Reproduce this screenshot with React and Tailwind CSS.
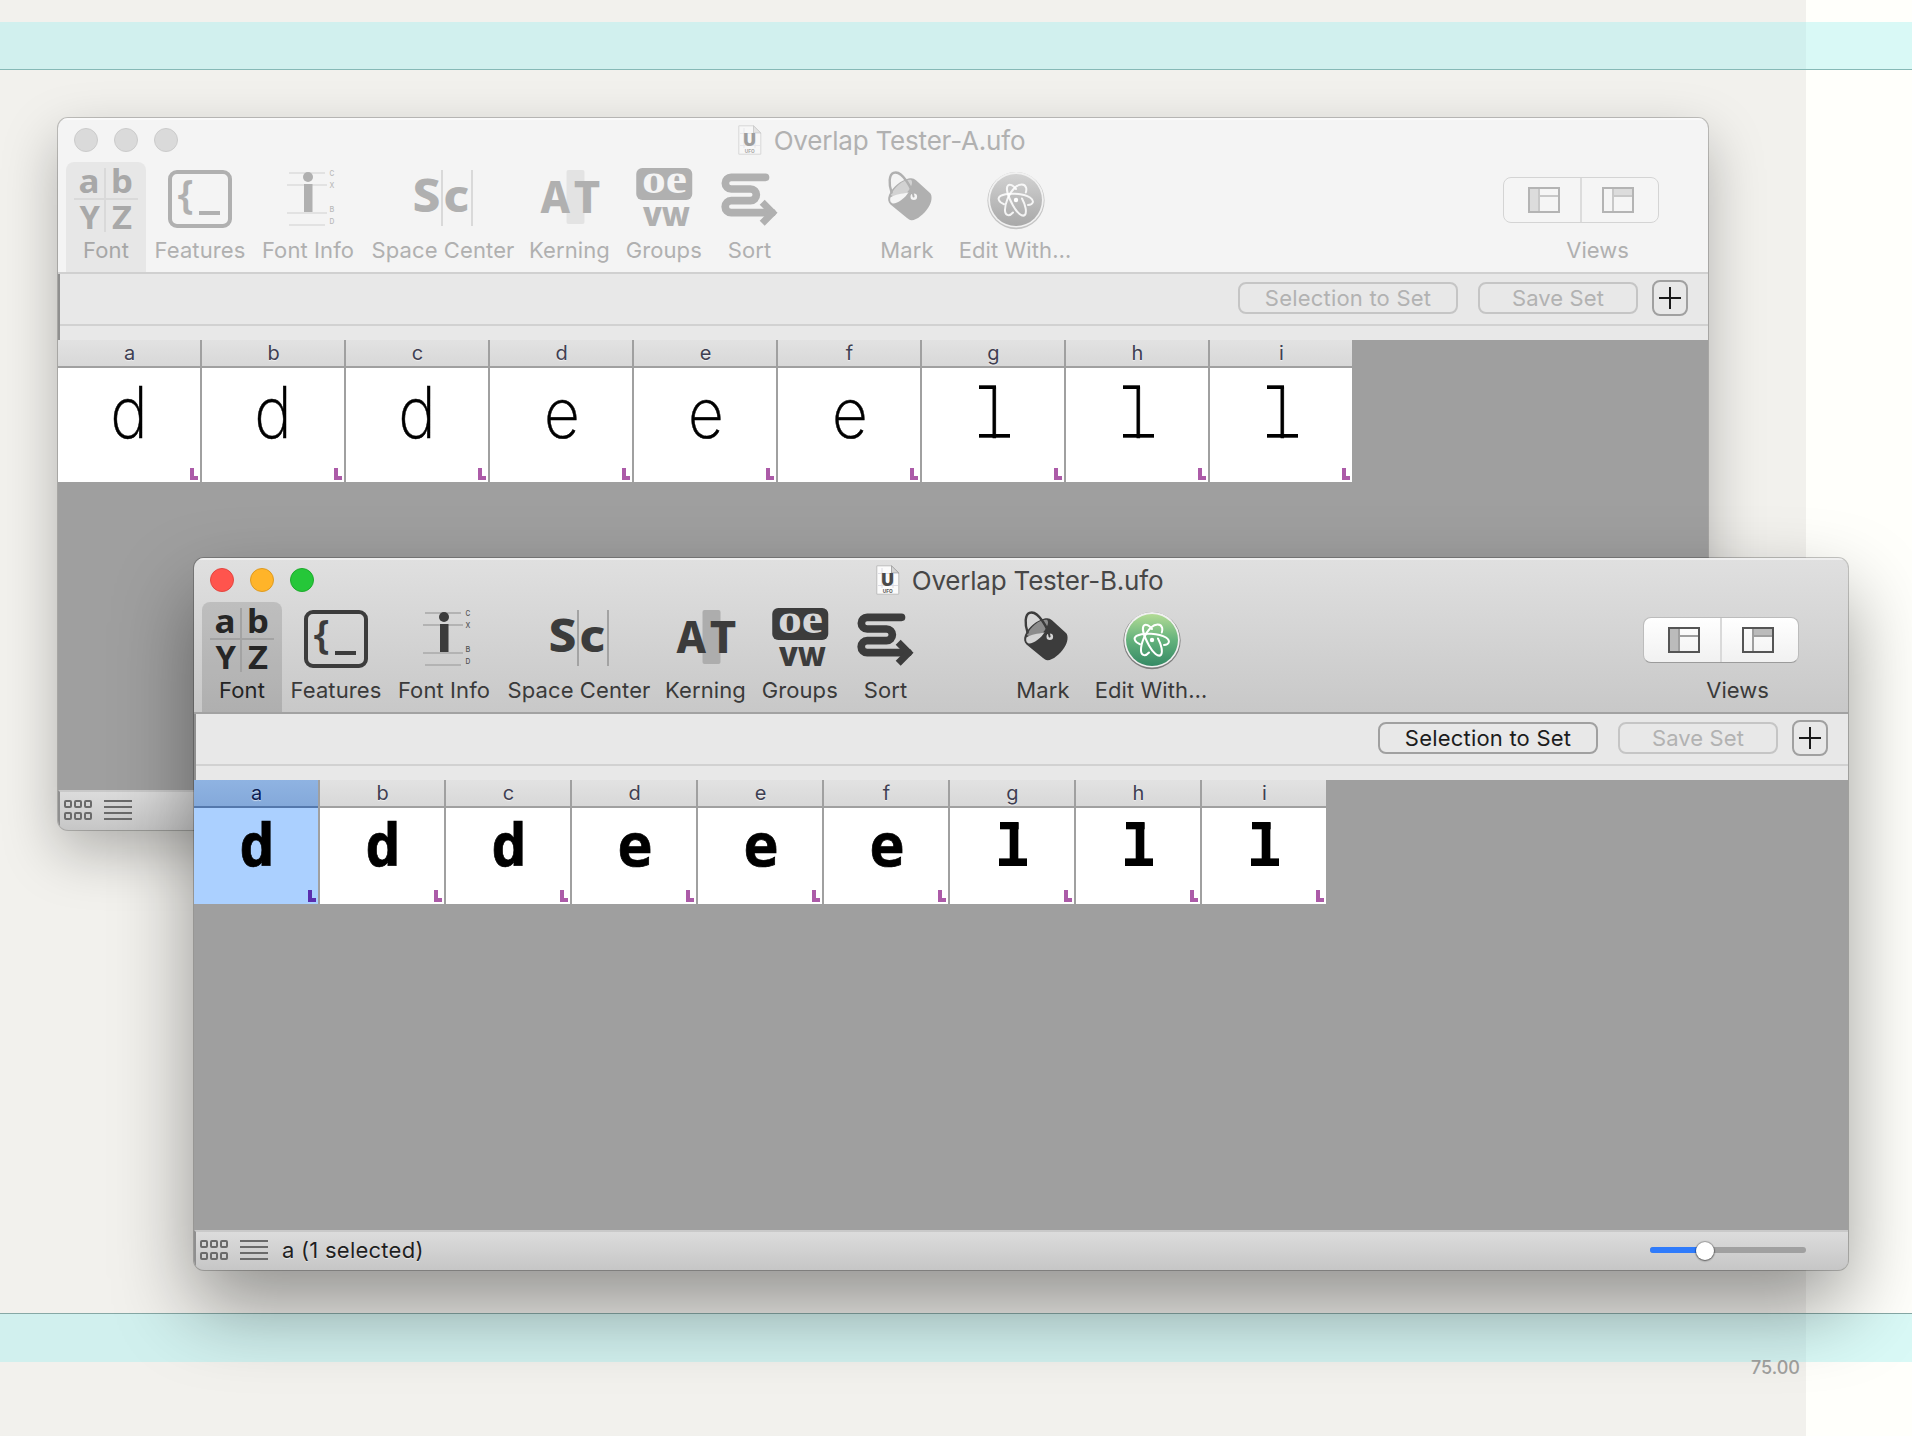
import React from "react";

const SANS = "Inter, 'Liberation Sans', sans-serif";

const activeTheme = {
  ink: "#3c3c3c",
  strong: "#262626",
  line: "#a3a3a3",
  thin: "#b3b3b3",
  soft: "#adadad",
  bg: "#d6d6d6",
  mid: "#8c8c8c",
  pale: "#d4d4d4",
};

const inactiveTheme = {
  ink: "#b0b0b0",
  strong: "#a8a8a8",
  line: "#d9d9d9",
  thin: "#e2e2e2",
  soft: "#e3e3e3",
  bg: "#f4f4f4",
  mid: "#d2d2d2",
  pale: "#f4f4f4",
};

function Glyph({ x, y, w, size, fill, family, weight = 700, children }) {
  return (
    <text
      x={x}
      y={y}
      fontSize={size}
      fontWeight={weight}
      fontFamily={family}
      fill={fill}
      textLength={w}
      lengthAdjust="spacingAndGlyphs"
    >
      {children}
    </text>
  );
}

function Icon({ children }) {
  return (
    <svg className="block h-[72px] w-[72px] shrink-0 overflow-visible" viewBox="0 0 72 72" fill="none">
      {children}
    </svg>
  );
}

const NOTO = "'Noto Sans', sans-serif";

function FontIcon({ t }) {
  return (
    <Icon>
      <path d="M4 35H68M35 4V68" stroke={t.line} strokeWidth="2" />
      <Glyph x={8.5} y={29.3} w={21} size={33} fill={t.strong} family={NOTO}>a</Glyph>
      <Glyph x={41} y={29.3} w={22} size={32} fill={t.strong} family={NOTO}>b</Glyph>
      <Glyph x={9.5} y={65} w={20.5} size={33} fill={t.strong} family={NOTO}>Y</Glyph>
      <Glyph x={42} y={65} w={20} size={33} fill={t.strong} family={NOTO}>Z</Glyph>
    </Icon>
  );
}

function FeaturesIcon({ t }) {
  return (
    <Icon>
      <rect x="6" y="8" width="60" height="54" rx="7" stroke={t.ink} strokeWidth="4" />
      <Glyph x={13.5} y={44} w={16} size={39} weight={600} fill={t.ink} family={NOTO}>{"{"}</Glyph>
      <rect x="35" y="47" width="21" height="4" fill={t.ink} />
    </Icon>
  );
}

function FontInfoIcon({ t }) {
  return (
    <Icon>
      <path d="M17 9H53M15 21H55M15 49H55M17 61H53" stroke={t.thin} strokeWidth="2" />
      <circle cx="36" cy="13" r="5" fill={t.ink} />
      <rect x="32" y="20" width="8.5" height="28" fill={t.ink} />
      <g opacity="0.85">
        <Glyph x={57.5} y={11.7} w={4.8} size={8} weight={500} fill={t.ink} family={SANS}>C</Glyph>
        <Glyph x={57.5} y={23.7} w={4.8} size={8} weight={500} fill={t.ink} family={SANS}>X</Glyph>
        <Glyph x={57.5} y={47.6} w={4.8} size={8} weight={500} fill={t.ink} family={SANS}>B</Glyph>
        <Glyph x={57.5} y={60} w={4.8} size={8} weight={500} fill={t.ink} family={SANS}>D</Glyph>
      </g>
    </Icon>
  );
}

function SpaceCenterIcon({ t }) {
  return (
    <Icon>
      <path d="M35 6V62M65 6V62" stroke={t.line} strokeWidth="2" />
      <Glyph x={5.6} y={48} w={28} size={46} fill={t.ink} family={NOTO} weight={800}>S</Glyph>
      <Glyph x={36.3} y={48} w={26} size={44} fill={t.ink} family={NOTO} weight={800}>c</Glyph>
    </Icon>
  );
}

function KerningIcon({ t }) {
  return (
    <Icon>
      <rect x="32.5" y="6" width="18" height="54" rx="2" fill={t.soft} />
      <Glyph x={6.5} y={48.7} w={29.5} size={45} fill={t.ink} family={NOTO} weight={800}>A</Glyph>
      <Glyph x={39.8} y={48.7} w={26.5} size={45} fill={t.ink} family={NOTO} weight={800}>T</Glyph>
    </Icon>
  );
}

function GroupsIcon({ t }) {
  return (
    <Icon>
      <rect x="8.25" y="4" width="56" height="32" rx="6" fill={t.ink} />
      <Glyph x={14} y={29.3} w={45} size={41} fill={t.bg} family="'Liberation Serif', serif">oe</Glyph>
      <Glyph x={15} y={61.7} w={47} size={27} fill={t.ink} family={NOTO} weight={900}>VW</Glyph>
    </Icon>
  );
}

function SortIcon({ t }) {
  return (
    <Icon>
      <path
        d="M51.5 13.3H17.2A5.85 5.85 0 0 0 17.2 25H36.5A5.85 5.85 0 0 1 36.5 36.7H17.2A5.85 5.85 0 0 0 17.2 48.7H58"
        stroke={t.ink}
        strokeWidth="7.7"
        strokeLinecap="round"
      />
      <path d="M48.2 38.2L58.6 48.7L48.2 59.2" stroke={t.ink} strokeWidth="7" />
    </Icon>
  );
}

function MarkIcon({ t }) {
  return (
    <Icon>
      <path
        d="M37.5 14.6C41 13.6 43 14.6 45 16.2L59 29C61.5 31.5 61.2 38 57 44C53 50 45.5 56.5 40.5 56.2C38.5 56 37.5 55.2 36 54L19.5 40.5C17 38 16.4 35 18 31C22 22.5 30 16.5 37.5 14.6Z"
        fill={t.ink}
      />
      <path d="M19.8 31C24 22 33 15 40 15.8C43 19 39 25 34.6 30.5C29 34 23 33 19.8 31Z" fill={t.mid} />
      <path d="M19.4 33.5C25 29.6 30 30.4 37.6 28.2C34 34.5 25 40.5 21.2 39.2C19 38.2 18.9 36 19.4 33.5Z" fill={t.pale} />
      <path
        d="M20.6 28.5C17.5 20 18 10.5 22.5 8.8C28 7 32 12 35.5 17C38.5 21.5 41.5 27 42.5 32"
        stroke={t.ink}
        strokeWidth="2.4"
        strokeLinecap="round"
      />
      <circle cx="42.8" cy="32.8" r="3.3" fill={t.pale} />
      <path d="M41 26L42.6 32.6" stroke={t.ink} strokeWidth="2" strokeLinecap="round" />
    </Icon>
  );
}

function EditIcon({ active }) {
  const id = active ? "atomOn" : "atomOff";
  return (
    <Icon>
      <defs>
        <linearGradient id={id} x1="0" y1="0" x2="0" y2="1">
          <stop offset="0" stopColor={active ? "#b2db95" : "#d2d2d2"} />
          <stop offset="0.5" stopColor={active ? "#64b27c" : "#bcbcbc"} />
          <stop offset="1" stopColor={active ? "#358a65" : "#a9a9a9"} />
        </linearGradient>
      </defs>
      <circle cx="37" cy="36.6" r="28.6" fill={active ? "#7d7d7d" : "#c4c4c4"} />
      <circle cx="37" cy="35.8" r="27.8" fill={active ? "#f0f0f0" : "#f1f1f1"} />
      <circle cx="37" cy="36" r="26" fill={`url(#${id})`} />
      <g stroke="#fff" strokeOpacity={active ? 1 : 0.85} strokeWidth="2" strokeLinecap="round">
        <path d="M25 40.2C19.5 38 18 34 21.5 31.8C28 28.5 44 29 51 33.5C56 37 54 40.8 49 41" />
        <path d="M43 34.5C46.5 41 48 48 46 50.8C43.5 53.5 38 49 34 41.5C29 32.5 26.5 24 29 21.4C31 19.6 34 21.5 37 25" />
        <path d="M34 48.5C30.5 52.5 26.5 52 26 47C25.6 40 30 29 36 23.5C40.5 19.5 46 19.5 47.2 24C47.6 26 47.3 27 46.8 28.5" />
      </g>
      <circle cx="37" cy="36" r="2.2" fill="#fff" />
    </Icon>
  );
}

function ToolItem({ width, label, active, selected, children }) {
  const box = selected
    ? active
      ? "rounded-t-[8px] bg-black/12 text-[#242424]"
      : "rounded-t-[8px] bg-black/5 text-[#a6a6a6]"
    : active
      ? "text-[#3a3a3a]"
      : "text-[#b0b0b0]";
  return (
    <div className={`flex h-full shrink-0 flex-col items-center pt-[2px] ${box}`} style={{ width }}>
      {children}
      <span className="whitespace-nowrap text-[22px] leading-[28px] tracking-[0.1px]">{label}</span>
    </div>
  );
}

function TitleIcon({ active }) {
  return (
    <svg className="block h-[30px] w-[24px]" viewBox="0 0 24 30" opacity={active ? 1 : 0.5}>
      <path d="M0.8 0.8H15.5L22.8 8V29.2H0.8Z" fill="#fbfbfb" stroke="#bdbdbd" strokeWidth="1" />
      <path d="M15.5 0.8V8H22.8Z" fill="#d5d5d5" stroke="#9a9a9a" strokeWidth="0.8" />
      <path d="M2 8.5H22M2 20.5H22M6 3V23M17 8V23" stroke="#dcdce4" strokeWidth="1" />
      <Glyph x={4.8} y={20.6} w={13.6} size={18} fill="#4a4a4a" family={NOTO} weight={900}>U</Glyph>
      <Glyph x={6.8} y={28} w={10} size={5} fill="#555" family={SANS}>UFO</Glyph>
    </svg>
  );
}

function Lights({ active }) {
  const colors = active
    ? ["bg-[#ff544d] border-[#e24640]", "bg-[#ffb429] border-[#dd9a20]", "bg-[#25c739] border-[#1dab2c]"]
    : ["bg-[#dadada] border-[#cbcbcb]", "bg-[#dadada] border-[#cbcbcb]", "bg-[#dadada] border-[#cbcbcb]"];
  return (
    <div className="absolute left-[16px] top-[10px] flex gap-[16px]">
      {colors.map((c, i) => (
        <span key={i} className={`h-[24px] w-[24px] rounded-full border ${c}`} />
      ))}
    </div>
  );
}

function Views({ active }) {
  const shell = active
    ? "border-[#bcbcbc] border-b-[#9b9b9b] bg-linear-to-b from-white to-[#f1f1f1]"
    : "border-[#d4d4d4] bg-[#f5f5f5]";
  const dark = active ? "#555" : "#b4b4b4";
  const mid = active ? "#9f9f9f" : "#c8c8c8";
  const fill = active ? "#bbb" : "#dcdcdc";
  return (
    <div className={`flex h-[46px] w-[156px] rounded-[8px] border ${shell}`}>
      <div className={`flex w-[78px] items-center justify-center border-r-2 ${active ? "border-[#d9d9d9]" : "border-[#dcdcdc]"}`}>
        <svg className="ml-[4px] h-[26px] w-[32px]" viewBox="0 0 32 26" fill="none">
          <rect x="2" y="2" width="8" height="22" fill={fill} />
          <path d="M11 2V24M12 9H30" stroke={mid} strokeWidth="2" />
          <rect x="1" y="1" width="30" height="24" stroke={dark} strokeWidth="2" />
        </svg>
      </div>
      <div className="flex flex-1 items-center justify-center">
        <svg className="mr-[4px] h-[26px] w-[32px]" viewBox="0 0 32 26" fill="none">
          <rect x="12" y="2" width="18" height="6" fill={fill} />
          <path d="M11 2V24M12 9H30" stroke={mid} strokeWidth="2" />
          <rect x="1" y="1" width="30" height="24" stroke={dark} strokeWidth="2" />
        </svg>
      </div>
    </div>
  );
}

function Toolbar({ active, title }) {
  const t = active ? activeTheme : inactiveTheme;
  return (
    <header
      className={`relative flex h-[156px] flex-col border-b-2 ${
        active
          ? "border-[#a2a2a2] bg-linear-to-b from-[#e0e0e0] to-[#c8c8c8] shadow-[inset_0_2px_0_#efefef]"
          : "border-[#d0d0d0] bg-[#f4f4f4] shadow-[inset_0_2px_0_#fafafa]"
      }`}
    >
      <Lights active={active} />
      <div
        className={`flex h-[44px] items-center justify-center gap-[12px] pr-[3px] ${
          active ? "text-[#474747]" : "text-[#b1b1b1]"
        }`}
      >
        <TitleIcon active={active} />
        <span className="whitespace-nowrap pt-[1px] text-[26px] tracking-[-0.2px]">{title}</span>
      </div>
      <div className="flex h-[110px] pl-[8px]">
        <ToolItem width={80} label="Font" active={active} selected><FontIcon t={t} /></ToolItem>
        <ToolItem width={108} label="Features" active={active}><FeaturesIcon t={t} /></ToolItem>
        <ToolItem width={108} label="Font Info" active={active}><FontInfoIcon t={t} /></ToolItem>
        <ToolItem width={162} label="Space Center" active={active}><SpaceCenterIcon t={t} /></ToolItem>
        <ToolItem width={91} label="Kerning" active={active}><KerningIcon t={t} /></ToolItem>
        <ToolItem width={97.5} label="Groups" active={active}><GroupsIcon t={t} /></ToolItem>
        <ToolItem width={74} label="Sort" active={active}><SortIcon t={t} /></ToolItem>
        <div className="w-[82.5px] shrink-0" />
        <ToolItem width={76} label="Mark" active={active}><MarkIcon t={t} /></ToolItem>
        <ToolItem width={140} label="Edit With…" active={active}><EditIcon active={active} /></ToolItem>
        <div className="ml-auto mr-[49px] flex w-[156px] flex-col items-center pt-[15px]">
          <Views active={active} />
          <span
            className={`pl-[33px] pt-[13px] text-[22px] leading-[28px] ${
              active ? "text-[#3a3a3a]" : "text-[#b0b0b0]"
            }`}
          >
            Views
          </span>
        </div>
      </div>
    </header>
  );
}

function SetBar({ active }) {
  const on = "border-[#a0a0a0] text-[#1c1c1c]";
  const off = "border-[#c5c5c5] text-[#b2b2b2]";
  return (
    <div className="h-[66px] border-l-2 border-[#8f8f8f] bg-[#e8e8e8]">
      <div className="flex h-[52px] items-start justify-end border-b-2 border-[#d1d1d1] pr-[20px] pt-[6px]">
        <div className={`mt-[2px] flex h-[32px] w-[220px] items-center justify-center rounded-[8px] border-2 text-[22px] tracking-[0.2px] ${active ? on : off}`}>
          Selection to Set
        </div>
        <div className={`ml-[20px] mt-[2px] flex h-[32px] w-[160px] items-center justify-center rounded-[8px] border-2 text-[22px] tracking-[0.1px] ${off}`}>
          Save Set
        </div>
        <div className="ml-[14px] flex h-[36px] w-[36px] items-center justify-center rounded-[8px] border-2 border-[#a0a0a0]">
          <svg className="h-[22px] w-[22px]" viewBox="0 0 22 22">
            <path d="M11 0V22M0 11H22" stroke="#1a1a1a" strokeWidth="2" />
          </svg>
        </div>
      </div>
    </div>
  );
}

const NAMES = ["a", "b", "c", "d", "e", "f", "g", "h", "i"];
const DRAWN = ["d", "d", "d", "e", "e", "e", "l", "l", "l"];

function LightGlyph({ ch }) {
  return (
    <svg className="block h-[114px] w-[142px]" viewBox="0 0 142 114">
      {ch === "l" && (
        <>
          <text x="72.3" y="69.7" textAnchor="middle" fontFamily="Inter, sans-serif" fontWeight="200" fontSize="70" fill="#000" stroke="#000" strokeWidth="0.4">l</text>
          <rect x="57" y="17.3" width="17" height="3.7" />
          <rect x="57" y="66" width="31" height="3.7" />
        </>
      )}
      {ch === "d" && (
        <text transform="translate(71 69.7) scale(0.88 1)" textAnchor="middle" fontFamily="Inter, sans-serif" fontWeight="200" fontSize="72" fill="#000" stroke="#000" strokeWidth="0.5">d</text>
      )}
      {ch === "e" && (
        <text transform="translate(71.8 69.5) scale(0.9 1)" textAnchor="middle" fontFamily="Inter, sans-serif" fontWeight="200" fontSize="69" fill="#000" stroke="#000" strokeWidth="0.5">e</text>
      )}
    </svg>
  );
}

function BoldGlyph({ ch }) {
  return (
    <svg className="block h-[96px] w-[124px]" viewBox="0 0 124 96">
      {ch === "l" ? (
        <>
          <text x="64" y="58" textAnchor="middle" fontFamily="Inter, sans-serif" fontWeight="700" fontSize="59" fill="#000">l</text>
          <rect x="50" y="14" width="18.6" height="7.3" />
          <rect x="49" y="50.4" width="28" height="7.6" />
        </>
      ) : (
        <text x="63" y="58" textAnchor="middle" fontFamily="'DejaVu Sans Mono', monospace" fontWeight="700" fontSize="58" fill="#000" stroke="#000" strokeWidth="0.7">{ch}</text>
      )}
    </svg>
  );
}

function Cell({ name, ch, bold, selected, last }) {
  return (
    <div className={`relative flex shrink-0 flex-col ${last ? "" : "border-r-2 border-[#a0a0a0]"}`}>
      <div
        className={`h-[28px] border-b-2 pl-[1px] text-center text-[20px] leading-[26px] [text-shadow:0_1px_1px_#fff9] ${
          selected
            ? "border-[#5478ac] bg-linear-to-b from-[#8fb3e2] to-[#84a9da] text-[#0a1c50]"
            : "border-[#a0a0a0] bg-linear-to-b from-[#e2e2e2] to-[#d8d8d8] text-[#3f3f52]"
        }`}
      >
        {name}
      </div>
      <div className={selected ? "bg-[#abd0ff]" : "bg-white"}>
        {bold ? <BoldGlyph ch={ch} /> : <LightGlyph ch={ch} />}
      </div>
      <span
        className={`absolute bottom-[2px] right-[2px] h-[12px] w-[8px] [clip-path:polygon(0_0,50%_0,50%_67%,100%_67%,100%_100%,0_100%)] ${
          selected ? "bg-[#5a2eae]" : "bg-[#ac5ba8]"
        }`}
      />
    </div>
  );
}

function StatusBar({ active }) {
  return (
    <footer className="flex h-[40px] items-center border-l-2 border-t-2 border-l-[#8f8f8f] border-t-[#c9c9c9] bg-linear-to-b from-[#dcdcdc] to-[#c6c6c6] pb-[2px] pl-[4px] pr-[42px]">
      <svg className="h-[20px] w-[28px] shrink-0" viewBox="0 0 28 20" fill="none" stroke="#6a6a6a" strokeWidth="2">
        {[1, 11, 21].map((x) => (
          <React.Fragment key={x}>
            <rect x={x} y="1" width="6" height="6" rx="1" />
            <rect x={x} y="13" width="6" height="6" rx="1" />
          </React.Fragment>
        ))}
      </svg>
      <svg className="ml-[12px] h-[20px] w-[28px] shrink-0" viewBox="0 0 28 20">
        <path d="M0 1H28M0 7H28M0 13H28M0 19H28" stroke="#6a6a6a" strokeWidth="2" />
      </svg>
      {active && (
        <>
          <span className="ml-[14px] whitespace-nowrap text-[22px] tracking-[0.25px] text-[#1f1f1f] [text-shadow:0_1px_1px_#fff8]">a (1 selected)</span>
          <div className="relative ml-auto h-[6px] w-[156px] rounded-full bg-[#a0a0a0]">
            <div className="h-[6px] w-[55px] rounded-l-full bg-[#2f7bfb]" />
            <span className="absolute left-[46px] top-[-5px] h-[18px] w-[18px] rounded-full bg-white shadow-[0_0_1px_1px_rgba(0,0,0,0.25),0_1px_2px_rgba(0,0,0,0.4)]" />
          </div>
        </>
      )}
    </footer>
  );
}

function FontWindow({ active, title, className }) {
  return (
    <section className={`absolute h-[712px] rounded-[10px] ${className}`}>
      <div className="flex h-full flex-col overflow-hidden rounded-[10px] bg-[#9f9f9f]">
        <Toolbar active={active} title={title} />
        <SetBar active={active} />
        <div className="flex flex-1 items-start">
          {NAMES.map((n, i) => (
            <Cell key={n} name={n} ch={DRAWN[i]} bold={active} selected={active && i === 0} last={i === NAMES.length - 1} />
          ))}
        </div>
        <StatusBar active={active} />
      </div>
    </section>
  );
}

export default function App() {
  return (
    <main className="relative flex h-[1436px] w-[1912px] overflow-hidden bg-[#fffffb] font-[Inter,'Liberation_Sans',sans-serif]">
      <div className="h-full w-[1806px] bg-[#f2f1ed]" />
      <div className="absolute left-0 top-[22px] h-[48px] w-full border-b border-[#86b9b6] bg-[#9ff1f0]/40" />
      <div className="absolute left-0 top-[1313px] h-[49px] w-full border-t border-[#86a8a5] bg-[#9ff1f0]/40" />
      <span className="absolute right-[112px] top-[1354px] text-[18px] font-medium leading-[28px] text-[#a0a09e]">75.00</span>
      <FontWindow
        title="Overlap Tester-A.ufo"
        className="left-[58px] top-[118px] w-[1650px] shadow-[0_0_0_1px_rgba(0,0,0,0.2),0_22px_56px_rgba(0,0,0,0.27)]"
      />
      <FontWindow
        active
        title="Overlap Tester-B.ufo"
        className="left-[194px] top-[558px] w-[1654px] shadow-[0_0_0_1px_rgba(0,0,0,0.22),0_36px_80px_rgba(0,0,0,0.4)]"
      />
    </main>
  );
}
